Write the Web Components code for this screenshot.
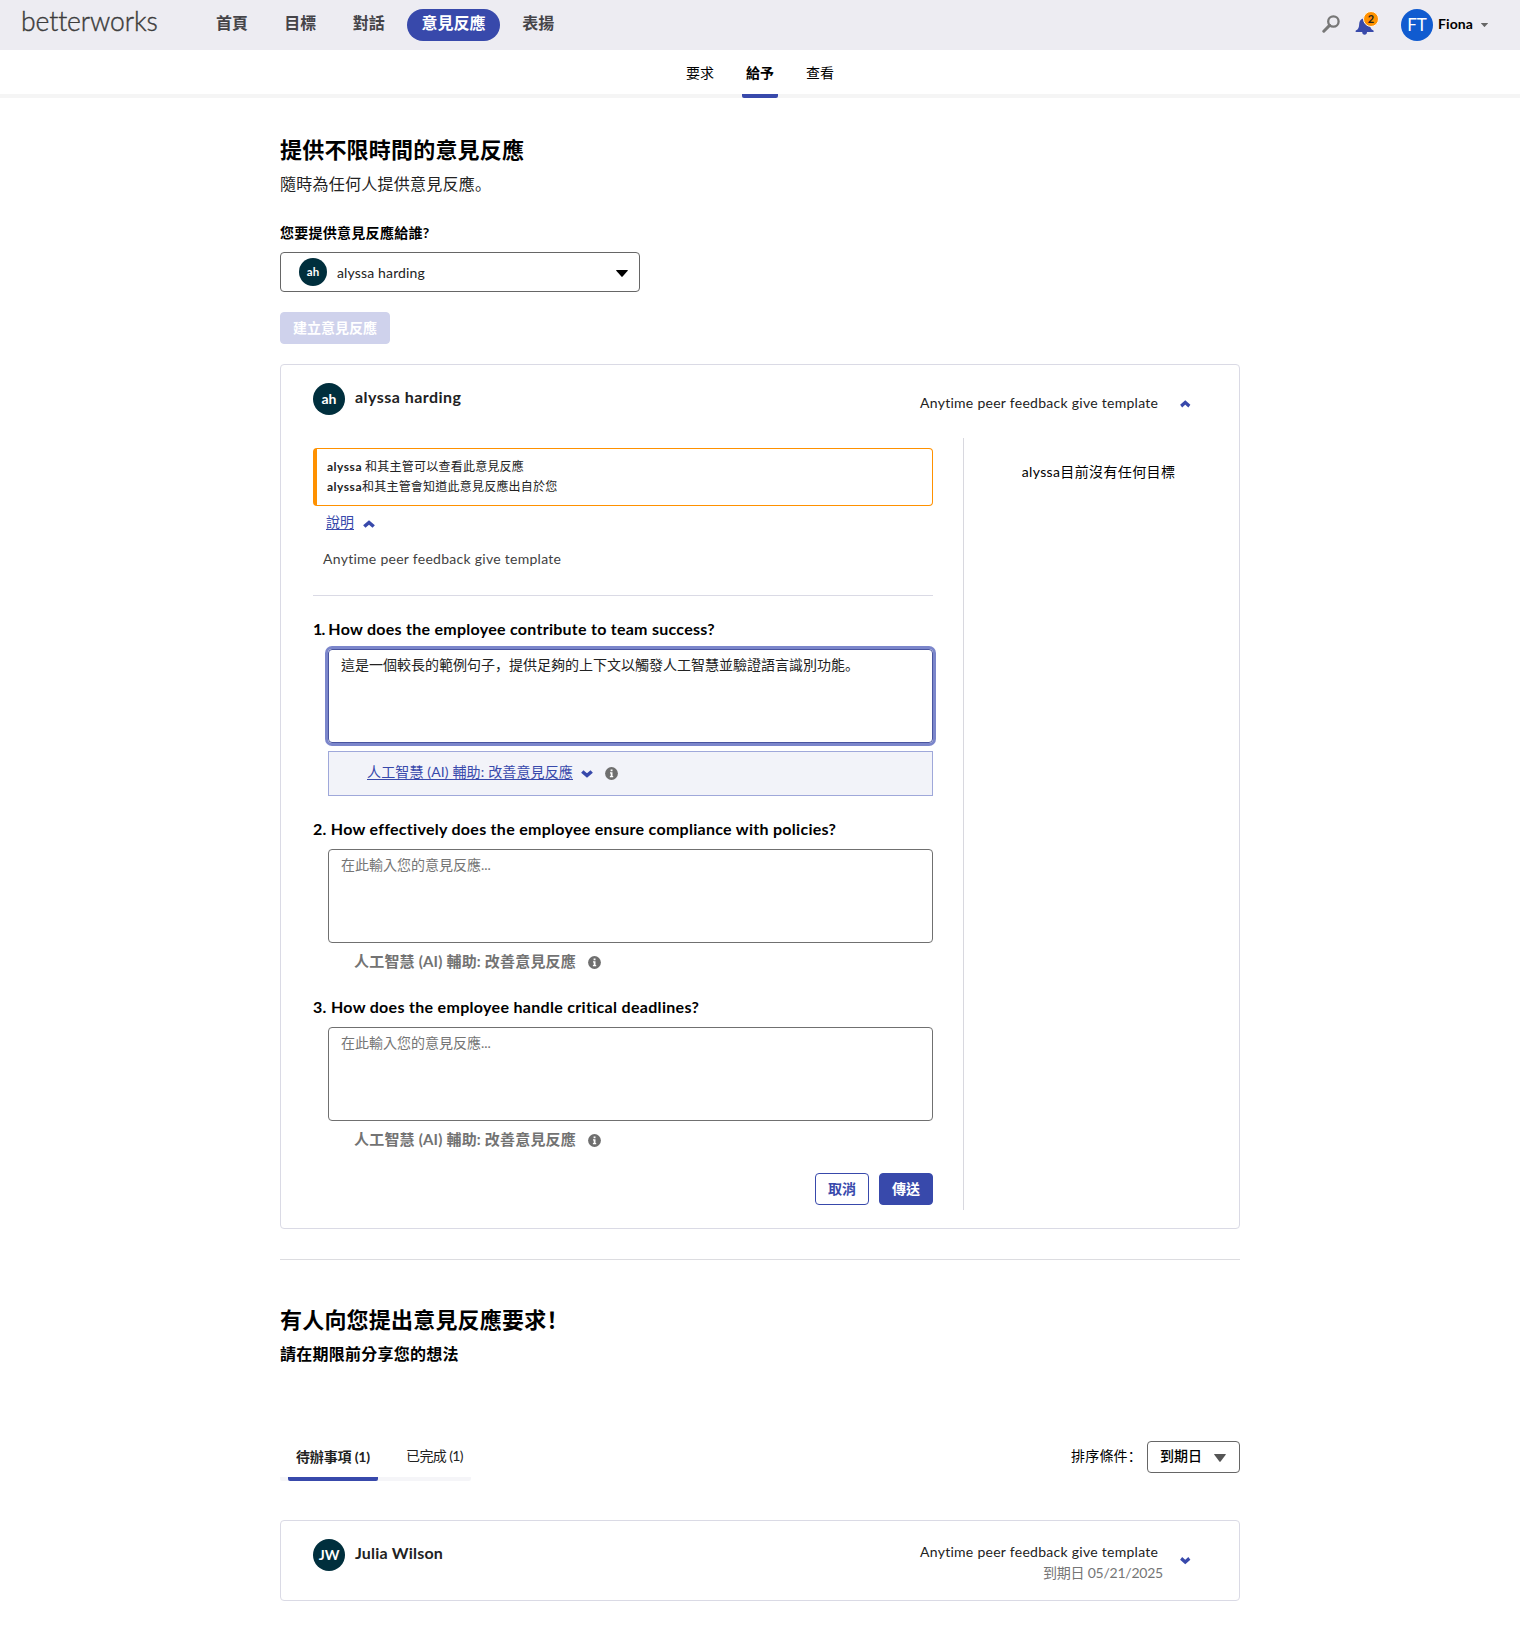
<!DOCTYPE html>
<html lang="zh-Hant">
<head>
<meta charset="utf-8">
<title>betterworks</title>
<style>
body{margin:0;background:#fff;color:#222;font-family:Lato,"Noto Sans CJK TC",sans-serif;font-size:14px;line-height:20px}
</style>
</head>
<body>
<bw-app></bw-app>
<script>
const define = (name, html, setup) => {
  const t = document.createElement('template');
  t.innerHTML = html;
  customElements.define(name, class extends HTMLElement {
    connectedCallback() {
      if (this.shadowRoot) return;
      const root = this.attachShadow({ mode: 'open' });
      const frag = t.content.cloneNode(true);
      if (setup) setup(this, frag);
      root.appendChild(frag);
    }
  });
};

const icons = {
  up: ['12', '8', '<path d="M1.3 6.500 6 2.500l4.700 4" fill="none" stroke="currentColor" stroke-width="3.600"/>'],
  down: ['12', '8', '<path d="M1.3 1.500 6 5.500l4.700-4" fill="none" stroke="currentColor" stroke-width="3.600"/>'],
  caret: ['12', '7', '<path d="M.6 0h10.8q.8 0 .3.7L6.6 6.6q-.6.6-1.2 0L.3.7Q-.2 0 .6 0z" fill="currentColor"/>'],
  info: ['13', '13', '<circle cx="6.5" cy="6.5" r="6.4" fill="currentColor"/><path d="M5.6 2.500h1.900v1.700H5.600zM5 5.200h2.500v3.900h.7v1.200H4.900V9.100h.8V6.400H5z" fill="#fff"/>'],
  search: ['18', '18', '<circle cx="11.4" cy="6.5" r="5.200" fill="none" stroke="currentColor" stroke-width="2.300"/><path d="M7.6 10.4 1.8 16.2" stroke="currentColor" stroke-width="3" stroke-linecap="round"/>'],
  bell: ['20', '20', '<path d="M9.2 1.2c.9 0 1.1.6 1.1 1.2 2.8.6 4.3 2.7 4.5 5.6.2 3.3 1 5.200 3.600 6.600.700.500.500 1.400-.400 1.400H12c0 1.700-1 2.700-2.400 2.700S7.200 17.700 7.200 16H1.300c-.900 0-1.100-.900-.400-1.400 2.600-1.400 3.100-3.300 3.300-6.600C4.400 5.100 5.500 3 8.100 2.400c0-.600.200-1.200 1.100-1.200z" fill="currentColor"/>']
};
define('bw-icon', '<style>:host{display:block;flex:none}svg{display:block;width:100%;height:100%}</style><svg></svg>', (el, f) => {
  const [w, h, body] = icons[el.getAttribute('name')];
  const s = f.querySelector('svg');
  s.setAttribute('viewBox', `0 0 ${w} ${h}`);
  s.setAttribute('preserveAspectRatio', 'none');
  s.innerHTML = body;
  el.style.width = (el.getAttribute('w') || w) + 'px';
  el.style.height = (el.getAttribute('h') || h) + 'px';
});

define('bw-avatar', `<style>:host{display:flex;flex:none;align-items:center;justify-content:center;width:32px;height:32px;border-radius:50%;background:#002f3d;color:#fff;font-weight:700;font-size:14px;line-height:16px}
:host([small]){width:28px;height:28px;font-size:11.5px}:host([user]){background:#105bd0;font-weight:400;font-size:17px}</style><slot></slot>`);

define('bw-button', `<style>:host{display:flex;box-sizing:border-box;height:32px;align-items:center;justify-content:center;border-radius:4px;background:#3849ab;border:1px solid #3849ab;color:#fff;font-weight:700}
:host([outline]){background:#fff;color:#3849ab}:host([disabled]){background:#cfd2ec;border-color:#cfd2ec}</style><slot></slot>`);

define('bw-nav-item', `<style>:host{display:flex;box-sizing:border-box;height:32px;padding:0 14px;border-radius:16px;font-weight:700;font-size:16px;line-height:27px;color:#454449}
:host([active]){background:#3849ab;color:#fff;padding:0 14.500px}</style><slot></slot>`);

define('bw-header', `<style>:host{display:flex;box-sizing:border-box;height:50px;background:#edecf2;padding:9px 32px 0 21px;align-items:flex-start}
.logo{font-weight:300;font-size:26.500px;line-height:24px;color:#3c3c3c;-webkit-text-stroke:.4px #3c3c3c;font-family:Lato;width:181px;flex:none}
nav{display:flex;gap:8.300px}
.right{margin-left:auto;display:flex;align-items:flex-start}
.search{color:#777;margin-top:6px}
.bell{position:relative;color:#3849ab;margin:7px 0 0 15px}
.badge{position:absolute;left:8px;top:-5px;width:14px;height:14px;border-radius:50%;background:#ff9100;border:1px solid #fff8ee;color:#222;font-weight:700;font-size:11px;line-height:14px;text-align:center}
bw-avatar{margin-left:26px}
.name{font-weight:700;color:#000;margin:5px 8px 0 5px;line-height:20px}
.caret{color:#666;margin-top:14px}</style>
<div class="logo"><fit-text w="136">betterworks</fit-text></div>
<nav><bw-nav-item>首頁</bw-nav-item><bw-nav-item>目標</bw-nav-item><bw-nav-item>對話</bw-nav-item><bw-nav-item active>意見反應</bw-nav-item><bw-nav-item>表揚</bw-nav-item></nav>
<div class="right"><bw-icon class="search" name="search"></bw-icon>
<div class="bell"><bw-icon name="bell"></bw-icon><span class="badge">2</span></div>
<bw-avatar user>FT</bw-avatar><span class="name"><fit-text w="35">Fiona</fit-text></span><bw-icon class="caret" name="caret" w="7" h="4"></bw-icon></div>`);

define('bw-subnav', `<style>:host{display:flex;box-sizing:border-box;height:48px;justify-content:center;gap:24px;border-bottom:4px solid #f5f5f5;color:#000}
span{width:36px;height:48px;line-height:45px;text-align:center}
.on{font-weight:700;background:linear-gradient(#3849ab,#3849ab) bottom/100% 4px no-repeat;border-radius:2px}</style>
<span>要求</span><span class="on">給予</span><span>查看</span>`);

define('bw-card', `<style>:host{display:block;box-sizing:border-box;border:1px solid #dadae5;border-radius:4px;padding-left:32px}
.head{display:flex;height:73px;padding:18px 48px 0 0;box-sizing:border-box;align-items:flex-start}
.name{font-weight:700;font-size:16px;margin:4px auto 0 10px}
.meta{text-align:right}</style>
<div class="head"><slot name="avatar"></slot><span class="name"><slot name="name"></slot></span><slot name="meta"></slot></div><slot></slot>`);

define('bw-question', `<style>:host{display:block;margin-top:22px}
.q{height:20px;line-height:21px;font-weight:700;font-size:16px;color:#000;white-space:nowrap}
.area{box-sizing:border-box;height:94px;margin:11px 0 0 15px;border:1px solid #707070;border-radius:4px;padding:5px 12px;color:#757575}
.ai{display:flex;box-sizing:border-box;height:23px;margin:8px 0 0 15px;padding:0 0 3px 26px;align-items:center;color:#737373;font-weight:700;font-size:15px;line-height:20px}
:host([focused]) .area{border-color:#4a559f;box-shadow:0 0 0 3px #7b86cb;color:#222}
:host([focused]) .ai{height:45px;padding:0 0 3px 38px;background:#f2f3f9;border:1px solid #9fa8da;font-size:14px;font-weight:400;color:#3849ab}
.info{color:#6f6f6f;margin:2px 0 0 11.500px}.chev{display:none;margin:4px 0 0 8px}
:host([focused]) .chev{display:block}
:host([focused]) .info{margin-left:12px}
:host([focused]) ::slotted([slot=ai]){text-decoration:underline;text-underline-offset:2px}</style>
<div class="q"><slot name="q"></slot></div><div class="area"><slot></slot></div>
<div class="ai"><slot name="ai"></slot><bw-icon class="chev" name="down"></bw-icon><bw-icon class="info" name="info"></bw-icon></div>`);

define('bw-tabs', `<style>:host{display:flex;height:40px;width:191px;box-sizing:border-box;padding:0 8px;background:linear-gradient(#f5f5f8,#f5f5f8) bottom/100% 4px no-repeat;border-radius:2px}
span{flex:none}
.on{width:90px;box-sizing:border-box;padding:6px 0 0 8px;font-weight:700;background:linear-gradient(#3849ab,#3849ab) bottom/100% 4px no-repeat;border-radius:2px}
.off{padding:5px 0 0 28px}</style>
<span class="on"><fit-text w="74">待辦事項 (1)</fit-text></span><span class="off"><fit-text w="57">已完成 (1)</fit-text></span>`);

define('bw-app', `<style>:host{display:block;height:1631px}
main{width:960px;margin:0 auto;display:flex;flex-direction:column;padding-top:38px}
h1,h2,p{margin:0}
h1,h2{font-size:22px;line-height:28px;padding-bottom:2px;font-weight:700;color:#000;letter-spacing:.200px}
h2{line-height:30px;padding:0}
.sub{font-size:16px;line-height:24px;margin-top:6px;letter-spacing:.250px}
.sub.b{font-weight:700;color:#000;margin-top:7px}
.label{margin-top:27px;line-height:20px;font-weight:700;color:#000;letter-spacing:.270px}
.select{box-sizing:border-box;width:360px;height:40px;margin-top:9px;border:1px solid #666;border-radius:4px;display:flex;align-items:center;padding:0 11px 0 18px}
.select bw-avatar{margin-top:-1px}.select fit-text{margin:1px auto 0 10px}.select bw-icon{color:#000;margin-top:2px}
.create{width:110px;margin:20px 0;}
.body{display:flex;height:772px;margin-bottom:18px}
.left{box-sizing:border-box;width:651px;padding:10px 30px 5px 0;border-right:1px solid #d8d8df}
.right{flex:1;padding:24px 6px 0 0;text-align:center;color:#000}
.note{box-sizing:border-box;height:58px;border:1px solid #ff9100;border-left-width:4px;border-radius:4px;padding:8px 10px;font-size:12px;line-height:20px}
.desc{display:flex;height:32px;align-items:center;padding-left:13px;color:#3849ab;gap:9px}
.desc u{text-underline-offset:2px}.desc bw-icon{margin-top:3px}
.tpl{margin:11px 0 26px 10px;line-height:20px;color:#3f3f3f}
hr{border:0;height:1px;background:#dadae5;margin:0}
.one{letter-spacing:-.8px;margin-right:-.3px}
.acts{display:flex;justify-content:flex-end;gap:10px;margin-top:21px}.acts bw-button{width:54px}
.meta{display:flex;color:#222}
.chev{color:#3849ab}
.rule{margin:30px 0 45px;background:#dcdce0}
.bar{display:flex;margin:75px 0 39px;justify-content:space-between}
.sort{display:flex;color:#000}.sort>span{margin:5px 5px 0 0;letter-spacing:.200px}
.pick{box-sizing:border-box;width:93px;height:32px;border:1px solid #666;border-radius:4px;padding:0 13px 3px 12px;display:flex;justify-content:space-between;align-items:center;font-weight:500}
.pick bw-icon{color:#555;margin-top:4px}
.due{color:#757575;margin-top:1px}
.card2{height:81px}
</style>
<bw-header></bw-header><bw-subnav></bw-subnav>
<main>
<h1>提供不限時間的意見反應</h1>
<p class="sub">隨時為任何人提供意見反應<span lang="zh-Hans">。</span></p>
<div class="label">您要提供意見反應給誰?</div>
<div class="select"><bw-avatar small>ah</bw-avatar><fit-text w="88">alyssa harding</fit-text><bw-icon name="caret"></bw-icon></div>
<bw-button class="create" disabled>建立意見反應</bw-button>
<bw-card>
  <bw-avatar slot="avatar">ah</bw-avatar><fit-text slot="name" w="106.500">alyssa harding</fit-text>
  <div slot="meta" class="meta"><fit-text w="238.500" style="margin-top:10px">Anytime peer feedback give template</fit-text><bw-icon class="chev" name="up" w="10.500" h="7.500" style="margin:17px .5px 0 21.500px"></bw-icon></div>
  <div class="body">
    <div class="left">
      <div class="note"><div><b><fit-text w="35">alyssa</fit-text></b> <fit-text w="159">和其主管可以查看此意見反應</fit-text></div><div><b><fit-text w="35">alyssa</fit-text></b><fit-text w="195.500">和其主管會知道此意見反應出自於您</fit-text></div></div>
      <div class="desc"><u>說明</u><bw-icon name="up"></bw-icon></div>
      <div class="tpl"><fit-text w="238.500">Anytime peer feedback give template</fit-text></div>
      <hr>
      <bw-question focused><fit-text slot="q" w="402.500"><span class="one">1.</span> How does the employee contribute to team success?</fit-text>這是一個較長的範例句子<span lang="zh-Hans">，</span>提供足夠的上下文以觸發人工智慧並驗證語言識別功能<span lang="zh-Hans">。</span><fit-text slot="ai" w="206">人工智慧 (AI) 輔助: 改善意見反應</fit-text></bw-question>
      <bw-question><fit-text slot="q" w="523">2. How effectively does the employee ensure compliance with policies?</fit-text>在此輸入您的意見反應...<fit-text slot="ai" w="222">人工智慧 (AI) 輔助: 改善意見反應</fit-text></bw-question>
      <bw-question><fit-text slot="q" w="386.500">3. How does the employee handle critical deadlines?</fit-text>在此輸入您的意見反應...<fit-text slot="ai" w="222">人工智慧 (AI) 輔助: 改善意見反應</fit-text></bw-question>
      <div class="acts"><bw-button outline>取消</bw-button><bw-button>傳送</bw-button></div>
    </div>
    <div class="right"><fit-text w="153.500">alyssa目前沒有任何目標</fit-text></div>
  </div>
</bw-card>
<hr class="rule">
<h2>有人向您提出意見反應要求<span lang="zh-Hans">！</span></h2>
<p class="sub b">請在期限前分享您的想法</p>
<div class="bar"><bw-tabs></bw-tabs><div class="sort"><span>排序條件<span lang="zh-Hans">：</span></span><div class="pick"><span>到期日</span><bw-icon name="caret" h="8"></bw-icon></div></div></div>
<bw-card class="card2">
  <bw-avatar slot="avatar">JW</bw-avatar><fit-text slot="name" w="88">Julia Wilson</fit-text>
  <div slot="meta" class="meta"><div style="display:flex;flex-direction:column;align-items:flex-end;margin:3px -4.500px 0 0"><fit-text w="238.500" style="margin-right:4.500px">Anytime peer feedback give template</fit-text><fit-text class="due" w="120">到期日 05/21/2025</fit-text></div><bw-icon class="chev" name="down" w="10.500" h="7.500" style="margin:18px .5px 0 21.500px"></bw-icon></div>
</bw-card>
</main>`);

// Tracks its text evenly so that the run fills the given advance width.
customElements.define('fit-text', class extends HTMLElement {
  connectedCallback() {
    if (this.shadowRoot) return;
    this.attachShadow({ mode: 'open' }).innerHTML = '<style>:host{display:inline-block;white-space:nowrap;flex:none}</style><slot></slot>';
    const w = +this.getAttribute('w');
    this.style.letterSpacing = '0';
    const gap = (w - this.getBoundingClientRect().width) / this.textContent.length;
    this.style.letterSpacing = gap.toFixed(3) + 'px';
    this.style.width = w + 'px';
  }
});
</script>
</body>
</html>
